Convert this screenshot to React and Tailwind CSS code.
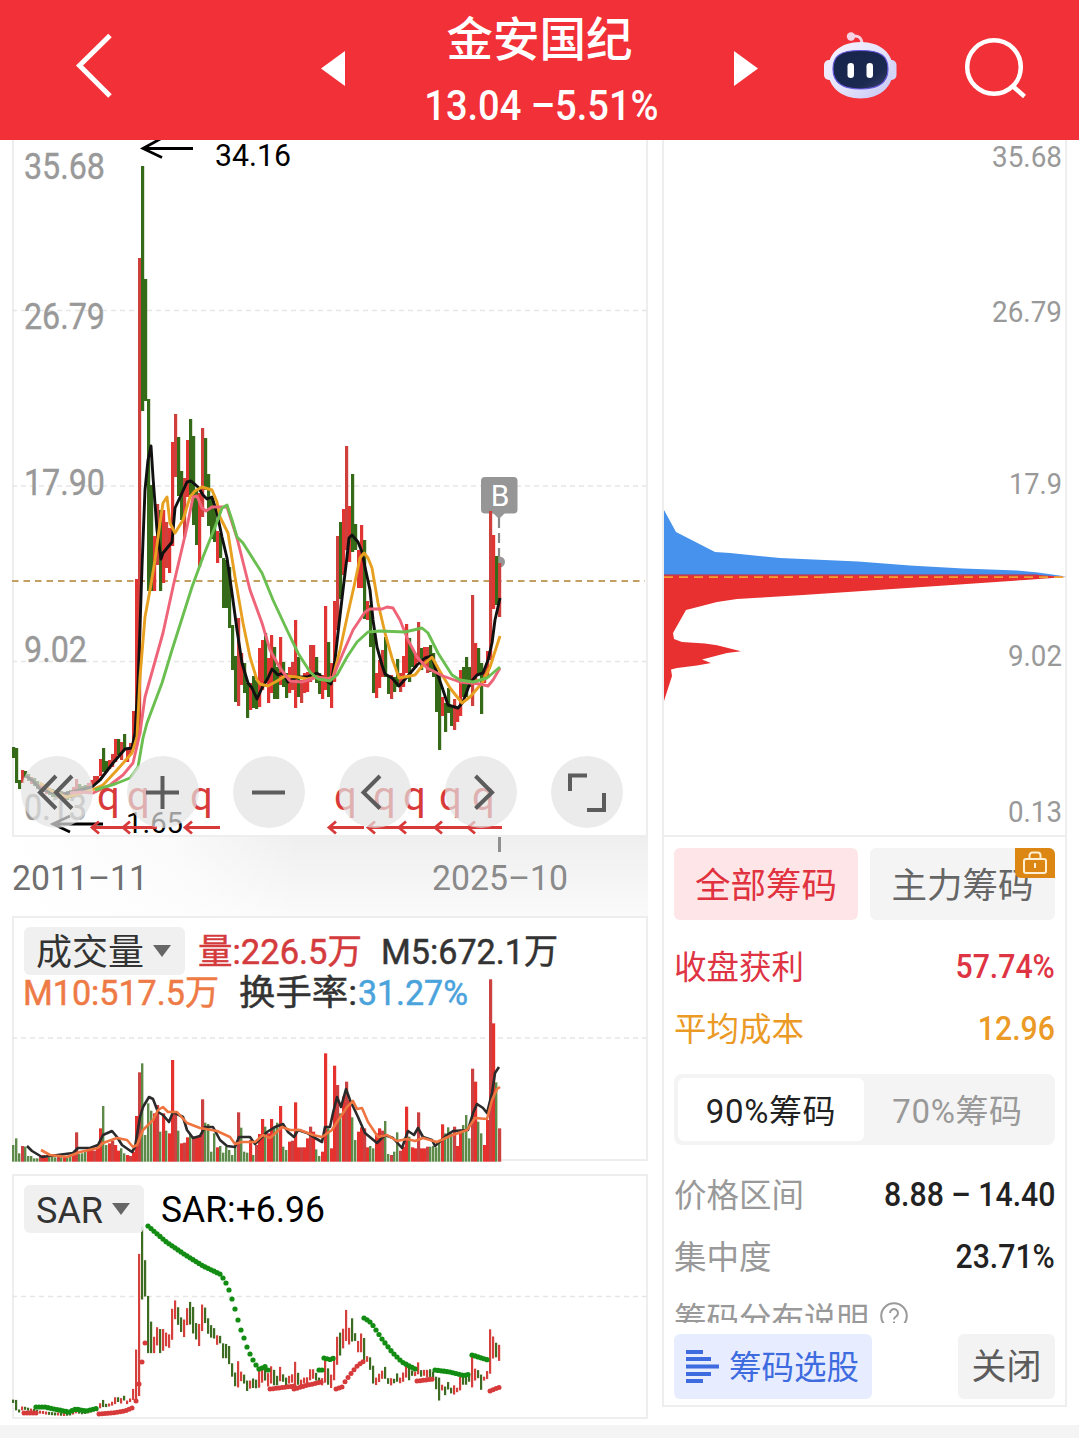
// [direction, high y, low y] for each monthly bar; bars are 3px wide and start at x = 12
const CANDLES = `g747-758 g748-783 g780-789 r770-783 g771-778 g774-781 r777-784 g778-786 g781-789 r784-791 r785-792
r787-794 g788-795 g789-797 g790-797 r790-798 g791-799 r792-800 g791-800 g790-798 r787-795 r779-793 g784-793 g786-792 g785-792
r783-790 r780-788 r776-784 r776-783 r759-776 g748-772 g761-772 r760-769 r754-767 r739-762 g739-755 r742-760 g734-750
r750-762 r743-755 r711-748 r579-745 r258-735 g166-411 g279-401 g399-591 g485-591 r536-591 r504-565 g510-591 r510-583
r522-568 r528-573 r442-546 r414-477 g437-496 g471-520 r478-537 r440-497 g419-495 g436-525 g490-545 r493-567 r428-517
g438-490 g474-526 g497-539 g507-542 r531-563 g533-558 g558-608 g560-608 g567-628 g625-670 g656-702 r618-706 r653-685
g663-693 g683-718 r683-710 g676-708 g680-709 r648-707 r640-690 g633-683 r658-703 r635-693 g647-699 g667-699 r637-685
g662-687 g673-698 r667-693 r662-690 r620-708 g657-697 r680-703 r673-693 r672-692 r645-682 r645-677 g657-683 g673-694
r675-699 r606-690 g642-697 r663-708 r601-682 r536-630 g522-599 r509-575 r446-550 r506-562 g474-552 g524-550 r550-588
r525-588 g540-619 r601-620 g605-647 g633-693 r673-698 r660-688 r650-677 g637-677 g675-694 r675-699 g677-692 g659-687
r673-692 r656-687 r624-673 g638-682 g649-667 r653-668 r622-662 g648-670 r647-667 r647-673 g645-672 g653-677 g670-712
g673-750 r697-716 g703-732 g688-713 g707-726 r699-730 r707-722 r670-716 g667-697 g657-697 g667-687 r595-706 r643-683
g648-675 g663-714 r670-683 r651-678 r511-660 r535-609 g556-605 r563-617`
  .split(/\s+/)
  .map((s) => {
    const [high, low] = s.slice(1).split('-').map(Number)
    return { up: s[0] === 'r', high, low }
  })

// volume bars, in thirds of a pixel counted down from y = 900
const VOLUMES = `g735 g715 g760 r738 g740 g768 g768 g775 g775 r770 r765 r772 g772 g770 g772 r770 g772 r772 g768 g765 r762 r697
g762 g760 g752 r750 r748 r752 r745 r685 g618 g735 r730 r722 r735 r752 g745 g760 r765 r768 r755 r648 r517 g490 g705 g610
g632 r640 r615 g695 r640 g692 r700 r480 r640 g692 r730 r728 r712 g705 r710 r712 r705 r598 g668 g672 g755 g700 r742 g738
g758 g740 g750 g765 g728 r637 g683 g755 g758 r720 g765 r735 r702 r657 g680 r700 r657 g680 g668 r618 g740 g750 r725 r722
r607 r742 r742 r742 r715 r680 r695 g748 g768 r755 r460 g685 r745 r497 r555 g640 r590 r545 r600 g652 g720 r695 r682 r685
r742 g738 g745 r700 r685 r692 g663 g762 r765 g755 g697 r752 r740 r620 g710 r742 r745 r637 r745 r745 r740 g740 g738 g742
g720 r673 g700 g682 g700 r680 r738 r690 g675 g645 g715 r506 r545 g665 g700 r735 r660 r238 r370 g547 r685`
  .split(/\s+/)
  .map((s) => ({ up: s[0] === 'r', top: 900 + Number(s.slice(1)) / 3 }))

const AVERAGES = [
  {
    color: '#111',
    points:
      '26,776 33,781 40,789 60,795 80,790 92,787 100,780 113,763 125,749 132,748 135,733 137,700 138,683 140,627 142,567 145,490 148,460 151,446 153,477 157,530 161,559 163,553 172,542 175,508 182,493 187,482 191,481 198,487 203,495 207,499 212,497 217,513 222,537 227,558 232,593 237,630 242,663 248,683 252,688 257,699 262,688 268,678 272,669 278,675 283,673 288,682 297,677 307,677 317,673 323,678 331,684 335,660 338,633 343,590 347,557 349,538 352,535 358,542 362,552 365,567 370,590 373,620 377,647 382,665 385,674 392,678 399,686 407,677 417,665 425,658 432,656 435,667 442,687 448,705 458,708 463,702 470,683 477,675 483,673 488,660 492,643 495,620 500,598',
  },
  {
    color: '#e8a020',
    points:
      '40,783 52,791 67,797 92,790 103,785 117,770 132,753 137,737 140,677 145,617 150,590 155,560 159,530 163,503 167,497 170,523 175,533 183,520 190,497 195,491 202,487 212,490 217,502 220,517 228,533 235,577 243,623 250,657 257,680 260,684 268,686 277,681 285,676 297,677 307,679 317,677 327,679 333,677 340,650 348,613 355,582 360,558 364,553 368,558 372,568 378,603 385,633 392,658 399,678 415,675 423,665 432,657 438,668 450,688 462,703 470,697 482,683 490,667 500,636',
  },
  {
    color: '#ee6478',
    points:
      '70,793 80,792 93,793 110,785 123,775 133,763 140,733 145,697 163,633 173,587 187,527 193,497 197,496 202,508 206,511 212,507 227,507 237,538 250,590 262,623 270,650 280,668 290,681 302,682 317,677 328,679 333,677 343,653 353,630 365,612 370,609 382,609 387,607 393,608 400,620 408,640 417,657 427,668 443,676 460,682 480,684 488,686 493,680 500,668',
  },
  {
    color: '#6abf50',
    points:
      '95,790 115,784 130,778 138,767 143,738 147,723 162,683 172,650 192,587 203,557 217,522 222,508 227,505 232,520 237,537 243,543 262,573 273,600 287,630 298,653 310,672 318,679 330,681 337,675 347,657 357,642 368,632 380,631 405,632 422,628 428,633 438,653 452,675 460,680 473,682 487,678 500,667',
  },
]

const VOL_M5 =
  '27,1146 32,1151 42,1157 73,1153 78,1148 90,1148 98,1145 103,1135 112,1131 117,1137 122,1145 132,1152 135,1147 140,1117 143,1107 149,1097 153,1099 158,1112 163,1115 169,1122 173,1112 183,1117 187,1130 193,1138 200,1136 205,1127 213,1127 220,1140 227,1146 235,1147 239,1137 250,1137 255,1144 267,1132 275,1127 283,1124 288,1132 294,1137 298,1130 307,1133 315,1138 322,1142 325,1127 330,1127 333,1113 337,1097 341,1107 346,1089 350,1100 358,1117 365,1133 377,1143 385,1135 393,1138 402,1148 408,1131 414,1135 418,1128 423,1137 432,1140 435,1146 447,1135 453,1131 468,1130 473,1113 477,1104 483,1108 487,1113 492,1093 495,1073 499,1067'
const VOL_M10 =
  '41,1150 50,1155 67,1157 80,1152 98,1148 103,1143 117,1138 127,1140 133,1147 137,1145 143,1130 153,1120 158,1110 163,1107 168,1112 177,1112 187,1123 200,1128 217,1131 230,1137 235,1144 242,1142 255,1142 263,1135 270,1138 282,1127 290,1130 300,1130 313,1135 322,1137 332,1130 337,1122 347,1107 353,1101 357,1109 362,1108 368,1122 378,1137 387,1135 397,1141 407,1139 415,1141 423,1138 437,1142 450,1136 467,1130 475,1118 487,1119 492,1100 497,1089 500,1087'

const SAR_GREEN = [
  [[36, 1407], [45, 1407], [54, 1409], [69, 1412], [76, 1409], [86, 1411], [98, 1408]],
  [[148, 1226], [166, 1241.7], [184, 1254], [203, 1266], [222, 1275]],
  [[223, 1278], [226, 1283], [229, 1290], [232, 1299], [235, 1309], [238, 1320], [241, 1330], [244, 1338], [247, 1347], [250, 1354], [253, 1360], [256, 1365], [259, 1369], [262, 1368], [265, 1366.5], [268, 1370]],
  [[319, 1370], [324, 1370]],
  [[324, 1358], [330, 1359.5], [334, 1358]],
  [[364, 1318], [369, 1321], [372, 1324], [376, 1330], [382, 1339], [392, 1352], [402, 1362], [417, 1370]],
  [[435, 1370], [450, 1372], [464, 1375.5], [470, 1374]],
  [[472, 1355], [488, 1360]],
]
const SAR_RED = [
  [[24, 1413], [36, 1413]],
  [[99, 1414], [112, 1413], [125, 1411], [134, 1407]],
  [[136, 1401], [136, 1401]],
  [[139, 1384], [139, 1384]],
  [[142, 1362], [142, 1362]],
  [[145, 1343], [145, 1343]],
  [[270, 1389], [294, 1386]],
  [[294, 1389], [308, 1385], [322, 1382]],
  [[336, 1389], [342, 1387], [346, 1380], [353, 1371], [358, 1365], [364, 1361]],
  [[417, 1381], [434, 1379]],
  [[490, 1391], [500, 1387]],
]

const BUTTONS = [
  'M35 20 19 36.500l16 16M51 20 35 36.500l16 16',
  'M35.500 20v33M19 36.500h33',
  'M19 36.500h33',
  'M41 20 24.500 36.500l16.500 16',
  'M30.500 20 47 36.500l-16.500 16',
  'M19 35V19.500h17M53 37v17H36',
]

const Q_MARKS = [97, 127, 190, 334, 373, 403, 439, 472]
const Q_ARROWS = [
  [91, 157], [122, 157], [184, 220], [328, 364], [367, 400], [398, 436], [434, 469], [467, 502],
]

// one SAR dot every 3px along the given corner points
function sarDots(segments) {
  return segments.flatMap((pts) => {
    const out = []
    const last = pts[pts.length - 1]
    for (let x = pts[0][0]; x <= last[0] + 0.5; x += 3) {
      const found = pts.findIndex((p) => p[0] >= x)
      const k = found < 0 ? pts.length - 1 : Math.max(1, found)
      const [x0, y0] = pts[k - 1]
      const [x1, y1] = pts[k]
      const t = x1 === x0 ? 0 : Math.min(1, (x - x0) / (x1 - x0))
      out.push([x, y0 + (y1 - y0) * t])
    }
    return out
  })
}

function Label({ x, y, w, size, fill, weight = 400, children }) {
  return (
    <text x={x} y={y} textLength={w} lengthAdjust="spacingAndGlyphs" fontSize={size} fill={fill} fontWeight={weight}>
      {children}
    </text>
  )
}

function Grid({ y, to = 647 }) {
  return <path d={`M12 ${y}H${to}`} stroke="#e6e6e6" strokeWidth="1.5" strokeDasharray="5 4" />
}

function Robot() {
  return (
    <svg className="w-[74px] h-[68px]" viewBox="823 32 74 68">
      <defs>
        <linearGradient id="head" x1="0" y1="0" x2="1" y2="1">
          <stop offset="0" stopColor="#f7f3ff" />
          <stop offset=".55" stopColor="#e3e2fb" />
          <stop offset="1" stopColor="#c3c4f2" />
        </linearGradient>
        <linearGradient id="visor" x1="0" y1="0" x2="1" y2="1">
          <stop offset="0" stopColor="#16244a" />
          <stop offset=".7" stopColor="#1b2850" />
          <stop offset="1" stopColor="#3a4470" />
        </linearGradient>
      </defs>
      <path d="M851 36.500c7-2 11 1 11 8" fill="none" stroke="#f6cfe0" strokeWidth="3" />
      <circle cx="851" cy="36.500" r="4.200" fill="#f5d3e4" />
      <rect x="824" y="60" width="11" height="20" rx="5" fill="#efeafc" />
      <rect x="885.500" y="60" width="11" height="20" rx="5" fill="#d5d5f7" />
      <path d="M860.500 42c20 0 32.500 11 32.500 28s-13.500 28.500-32.500 28.500S828 87 828 70s12.500-28 32.500-28z" fill="url(#head)" />
      <path d="M860.500 50.500c20 0 27.500 5 27.500 18.500 0 14-9.500 20-27.500 20S833 83 833 69c0-13.500 7.500-18.500 27.500-18.500z" fill="url(#visor)" stroke="#6a5ae0" strokeWidth="1.200" />
      <rect x="847.500" y="63" width="6.500" height="15" rx="3.200" fill="#fff" />
      <rect x="866.500" y="63" width="6.500" height="15" rx="3.200" fill="#fff" />
    </svg>
  )
}

function Header() {
  return (
    <header className="h-[140px] bg-[#f23037] text-white flex items-start">
      <svg className="w-[40px] h-[70px] mt-[31px] ml-[74px]" viewBox="74 31 40 70" fill="none" stroke="#fff" strokeWidth="5">
        <path d="M110 35.500 79.500 65.500 110 96" />
      </svg>
      <svg className="w-[24px] h-[36px] mt-[51px] ml-[207px]" viewBox="0 0 24 36" fill="#fff">
        <path d="M24 0v35L0 17.500z" />
      </svg>
      <div className="w-[389px] flex flex-col items-center">
        <h1 className="text-[46.500px] leading-[60px] mt-[6px] font-medium font-['Noto_Sans_CJK_SC',sans-serif]">金安国纪</h1>
        <div className="text-[42px] leading-[50px] mt-[15px] font-medium whitespace-pre scale-x-[.905] ml-[3px]">13.04 –5.51%</div>
      </div>
      <svg className="w-[24px] h-[36px] mt-[51px]" viewBox="0 0 24 36" fill="#fff">
        <path d="M0 0v35l24-17.500z" />
      </svg>
      <div className="mt-[32px] ml-[65px]">
        <Robot />
      </div>
      <svg className="w-[64px] h-[64px] mt-[36px] ml-[66px]" viewBox="963 36 64 64" fill="none" stroke="#fff" strokeWidth="4.500">
        <circle cx="994" cy="67" r="26.800" />
        <path d="M1012.500 86l12 10.500" />
      </svg>
    </header>
  )
}

function PriceChart() {
  return (
    <section className="relative h-[697px] border-x-2 border-b-2 border-[#eeeeee]">
      <svg className="absolute -left-[2px] top-0 w-[636px] h-[697px]" viewBox="12 140 636 697">
        <Grid y={310.500} />
        <Grid y={486} />
        <Grid y={661.500} />
        <path d="M12 581H645" stroke="#c3a062" strokeWidth="1.800" strokeDasharray="6.500 5" />
        <g stroke="#999" strokeWidth=".4">
          <Label x={24} y={179} w={81} size={36.500} fill="#999">35.68</Label>
          <Label x={24} y={329} w={81} size={36.500} fill="#999">26.79</Label>
          <Label x={24} y={495} w={81} size={36.500} fill="#999">17.90</Label>
          <Label x={24} y={662} w={63} size={36.500} fill="#999">9.02</Label>
          <Label x={24} y={820} w={63} size={36.500} fill="#999">0.13</Label>
        </g>
        <rect x="481" y="477" width="36.500" height="36.500" rx="4" fill="#969696" />
        <path d="M493 513h12l-6 6z" fill="#969696" />
        <text x="500" y="505.500" textAnchor="middle" fontSize="28" fill="#fff" className="font-['DejaVu_Sans',sans-serif]">B</text>
        <path d="M499 518v42" stroke="#888" strokeWidth="2.200" strokeDasharray="10 5" />
        <circle cx="499.500" cy="562" r="5.500" fill="#969696" />
        {CANDLES.map((c, i) => (
          <rect key={i} x={12 + i * 3} y={c.high} width="3.200" height={c.low - c.high} fill={c.up ? (i % 3 ? '#e03533' : '#cf3f3c') : '#346a18'} />
        ))}
        {AVERAGES.map((a) => (
          <polyline key={a.color} points={a.points} fill="none" stroke={a.color} strokeWidth="2.900" strokeLinejoin="round" />
        ))}
        <path d="M193 148.500H143M162 138l-19 10.500 19 9" fill="none" stroke="#000" strokeWidth="2.800" />
        <Label x={215} y={166} w={76} size={31} fill="#000">34.16</Label>
        <path d="M103 824H53M70 816l-17 8 17 8" fill="none" stroke="#000" strokeWidth="2.800" />
        <Label x={126} y={833} w={57} size={30} fill="#000">1.65</Label>
        {Q_MARKS.map((x) => (
          <text key={x} x={x} y="810" fontSize="40" fill="#d83a3a">q</text>
        ))}
        {Q_ARROWS.map(([x0, x1]) => (
          <path key={x0} d={`M${x1} 827.500H${x0 + 1}M${x0 + 8} 821.500l-7 6 7 6`} fill="none" stroke="#d83a3a" strokeWidth="2.800" />
        ))}
      </svg>
      <div className="absolute left-[6.500px] top-[616px] flex gap-[34px]">
        {BUTTONS.map((d) => (
          <button key={d} className="size-[72px] rounded-full bg-[#e2e2e2]/70">
            <svg className="size-[72px]" viewBox="0 0 72 72" fill="none" stroke="#5c5c5c" strokeWidth="4">
              <path d={d} />
            </svg>
          </button>
        ))}
      </div>
    </section>
  )
}

function Selector({ children }) {
  return (
    <button className="absolute left-[10px] top-[9px] h-[48px] rounded-md bg-[#eeeeee]/90 pl-[12px] pr-[14px] flex items-center gap-[9px] text-[36px] leading-none text-[#333]">
      <span className="pt-[4px]">{children}</span>
      <svg className="w-[18px] h-[12px]" viewBox="0 0 18 12" fill="#666">
        <path d="M0 0h18L9 12z" />
      </svg>
    </button>
  )
}

function VolumeChart() {
  return (
    <section className="relative h-[245px] border-2 border-[#eeeeee]">
      <svg className="absolute -left-[2px] -top-[2px] w-[636px] h-[246px]" viewBox="12 916 636 246">
        <Grid y={1038} />
        {VOLUMES.map((v, i) => (
          <rect key={i} x={12 + i * 3} y={v.top} width={v.up ? 3.2 : 2.4} height={1161.7 - v.top} fill={v.up ? (i % 3 ? '#e5322f' : '#cc4242') : '#5d8a48'} />
        ))}
        <polyline points={VOL_M5} fill="none" stroke="#2b2b2b" strokeWidth="2.600" strokeLinejoin="round" />
        <polyline points={VOL_M10} fill="none" stroke="#ee7440" strokeWidth="2.600" strokeLinejoin="round" />
        <g strokeWidth=".5">
          <g stroke="#d43b3d"><Label x={198} y={964} w={164} size={35} fill="#d43b3d">量:226.5万</Label></g>
          <g stroke="#333"><Label x={381} y={964} w={177} size={35} fill="#333">M5:672.1万</Label></g>
          <g stroke="#ee7a45"><Label x={23} y={1004.500} w={196} size={35} fill="#ee7a45">M10:517.5万</Label></g>
          <g stroke="#333"><Label x={239} y={1004.500} w={118} size={35} fill="#333">换手率:</Label></g>
          <g stroke="#4ba3dc"><Label x={358} y={1004.500} w={110} size={35} fill="#4ba3dc">31.27%</Label></g>
        </g>
      </svg>
      <Selector>成交量</Selector>
    </section>
  )
}

function SarChart() {
  return (
    <section className="relative h-[245px] mt-[13px] border-2 border-[#eeeeee]">
      <svg className="absolute -left-[2px] -top-[2px] w-[636px] h-[245px]" viewBox="12 1174 636 245">
        <Grid y={1296.500} />
        {CANDLES.map((c, i) => (
          <rect key={i} x={12 + i * 3} y={1226.5 + (c.high - 166) * 0.298} width="2.200" height={Math.max(3, (c.low - c.high) * 0.298)} fill={c.up ? '#d5403c' : '#3c6b22'} />
        ))}
        {sarDots(SAR_RED).map(([x, y], i) => (
          <circle key={i} cx={x} cy={y} r="2.500" fill="#d63a3a" />
        ))}
        {sarDots(SAR_GREEN).map(([x, y], i) => (
          <circle key={i} cx={x} cy={y} r="2.600" fill="#128c12" />
        ))}
        <Label x={161} y={1222} w={164} size={36} fill="#000">SAR:+6.96</Label>
      </svg>
      <Selector>SAR</Selector>
    </section>
  )
}

function ChipProfile() {
  return (
    <svg className="block w-[402px] h-[695px]" viewBox="664 140 402 695">
      <path d="M664 510l12 22 39 20 15 1 50 5 78 3.500 52 4 53 3 54 2 21 2 28 4H664z" fill="#4792ec" />
      <path d="M664 575h374l28 2-41 3-88 6-67 4.500-67 4.500-45 2.800-21 1.200-20 3-31 8-13 23 1 6 8 3 23 1.500 12 1.700 24 6-14 1.700-25 6.600 9 3.500-14 2.500-20 2.500-6 1.500 1 6.500-8 25z" fill="#e83030" />
      <path d="M664 574.700h374" stroke="#8c5a8c" strokeWidth="1.200" />
      <path d="M664 577.200h399" stroke="#f0a030" strokeWidth="1.800" strokeDasharray="9 6" />
      <g textAnchor="end" fontSize="29" fill="#999">
        <text x="1062" y="167" textLength="70" lengthAdjust="spacingAndGlyphs">35.68</text>
        <text x="1062" y="322" textLength="70" lengthAdjust="spacingAndGlyphs">26.79</text>
        <text x="1062" y="494" textLength="53" lengthAdjust="spacingAndGlyphs">17.9</text>
        <text x="1062" y="666" textLength="54" lengthAdjust="spacingAndGlyphs">9.02</text>
        <text x="1062" y="822" textLength="54" lengthAdjust="spacingAndGlyphs">0.13</text>
      </g>
    </svg>
  )
}

function Row({ label, value, className, labelClass = '' }) {
  return (
    <div className={`h-[62px] flex items-center justify-between ${className}`}>
      <span className={`text-[32.500px] pt-[4px] ${labelClass}`}>{label}</span>
      <span className="text-[32.500px] font-medium scale-x-[.93] origin-right pt-[3px]">{value}</span>
    </div>
  )
}

function ChipPanel() {
  return (
    <aside className="w-[405px] h-[1267px] -ml-px border-x-2 border-b-2 border-[#eeeeee] flex flex-col">
      <ChipProfile />
      <div className="border-t-2 border-[#eeeeee] px-[10px] pt-[11px] flex-1">
        <div className="flex gap-[12px] text-[35.500px]">
          <button className="w-[184px] h-[72px] pt-[5px] rounded-md bg-[#fee6e8] text-[#e0323f]">全部筹码</button>
          <button className="relative flex-1 h-[72px] pt-[5px] rounded-md bg-[#f4f4f4] text-[#666]">
            主力筹码
            <span className="absolute right-0 top-0 w-[40px] h-[30px] rounded-tr-md rounded-bl-md bg-[#dc8614] flex justify-center pt-[3px]">
              <svg className="w-[24px] h-[23px]" viewBox="0 0 24 23" fill="none" stroke="#fff0d4" strokeWidth="2">
                <rect x="1" y="8" width="22" height="14" rx="2" />
                <path d="M6.500 8V4.500A3 3 0 0 1 9.500 1.500h5a3 3 0 0 1 3 3V8M12 12v5" />
              </svg>
            </span>
          </button>
        </div>
        <div className="pt-[15px]">
          <Row label="收盘获利" value="57.74%" className="text-[#de3444]" />
          <Row label="平均成本" value="12.96" className="text-[#eb9a26]" />
        </div>
        <div className="mt-[15px] h-[71px] rounded-lg bg-[#f4f4f4] p-[4px] flex text-[33px] tracking-[.6px]">
          <button className="w-[186px] rounded-md bg-white text-[#222] pt-[4px]">90%筹码</button>
          <button className="flex-1 text-[#999] pt-[4px]">70%筹码</button>
        </div>
        <div className="pt-[18px]">
          <Row label="价格区间" value="8.88 – 14.40" className="text-[#222]" labelClass="text-[#999]" />
          <Row label="集中度" value="23.71%" className="text-[#222]" labelClass="text-[#999]" />
        </div>
        <div className="h-[36px] overflow-hidden">
          <div className="h-[62px] flex items-center gap-[11px] text-[32.500px] text-[#999]">
            <span className="pt-[4px]">筹码分布说明</span>
            <svg className="size-[28px] mb-[5px]" viewBox="0 0 28 28" fill="none" stroke="#999" strokeWidth="2">
              <circle cx="14" cy="14" r="12.800" />
              <path d="M10 11a4 4 0 1 1 6 3.500c-1.500 1-2 1.500-2 3M14 19.500v2.500" />
            </svg>
          </div>
        </div>
        <div className="mt-[11px] flex justify-between">
          <button className="w-[198px] h-[65px] rounded-md bg-[#e7edfe] text-[#3e6be0] text-[32.500px] flex items-center pl-[12px] gap-[10px]">
            <svg className="w-[33px] h-[33px]" viewBox="0 0 33 33" fill="#3e6be0">
              <path d="M0 0h17v4H0zM0 7h25v4H0zM0 14.500h33v4H0zM0 22h25v4H0zM0 29h17v4H0z" />
            </svg>
            <span className="pt-[4px]">筹码选股</span>
          </button>
          <button className="w-[97px] h-[65px] pt-[4px] rounded-md bg-[#f3f3f3] text-[#5c5c5c] text-[35px]">关闭</button>
        </div>
      </div>
    </aside>
  )
}

export default function App() {
  return (
    <div className="w-[1079px] h-[1442px] overflow-hidden bg-white font-[Roboto,'Noto_Sans_CJK_SC',sans-serif]">
      <Header />
      <main className="h-[1285px] flex gap-[15px] pl-[12px]">
        <div className="w-[636px]">
          <PriceChart />
          <div className="relative h-[79px] bg-linear-to-b from-[#efefef] to-[#fafafa] text-[35px] leading-[84px]">
            <div className="absolute inset-0 bg-linear-to-r from-white via-white/70 via-25% to-transparent to-45%" />
            <div className="relative flex">
              <span className="w-[420px] text-[#707070] scale-x-[.965] origin-left">2011–11</span>
              <span className="text-[#8a8a8a] scale-x-[.965] origin-left">2025–10</span>
            </div>
            <div className="absolute left-[486px] top-0 w-[3px] h-[15px] bg-[#8f8f8f]" />
          </div>
          <VolumeChart />
          <SarChart />
        </div>
        <ChipPanel />
      </main>
      <div className="h-[13px] bg-[#f4f4f4]" />
    </div>
  )
}
